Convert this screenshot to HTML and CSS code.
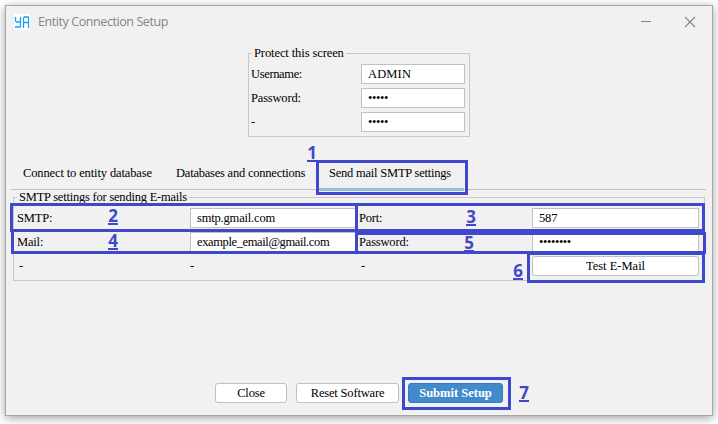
FILE: index.html
```html
<!DOCTYPE html>
<html lang="en">
<head>
<meta charset="utf-8">
<title>Entity Connection Setup</title>
<link rel="stylesheet" href="styles.css">
</head>
<body>
<div class="window">
  <header class="titlebar">
    <svg class="logo" width="16" height="16" viewBox="0 0 16 16"><path d="M0 0h16v16H0z" fill="#fff"/><path d="M1.500 3v4l1 1h3.500M6.500 3v9.500l-1 .5H1M9.500 14V4l1-1h3.500l.5 1v10M9.500 8.500h5" fill="none" stroke="#1c9df0" stroke-width="1.300"/></svg>
    <span class="title">Entity Connection Setup</span>
    <svg class="controls" width="56" height="12" viewBox="0 0 56 12"><path d="M0 5.500h10" stroke="#858585"/><path d="M44 1l10 10M54 1l-10 10" stroke="#858585" stroke-width="1.100"/></svg>
  </header>
  <section class="group protect">
    <h2 class="legend">Protect this screen</h2>
    <div class="row"><span class="name">Username:</span><div class="field caps">ADMIN</div></div>
    <div class="row"><span>Password:</span><div class="field secret">•••••</div></div>
    <div class="row"><span>-</span><div class="field secret">•••••</div></div>
  </section>
  <nav class="tabs">
    <div class="tab first">Connect to entity database</div>
    <div class="tab">Databases and connections</div>
    <div class="tab active">Send mail SMTP settings</div>
  </nav>
  <section class="group smtp">
    <h2 class="legend">SMTP settings for sending E-mails</h2>
    <div class="grid">
      <span>SMTP:</span><div class="field">smtp.gmail.com</div><span>Port:</span><div class="field">587</div>
      <span>Mail:</span><div class="field tight">example_email@gmail.com</div><span>Password:</span><div class="field secret">••••••••</div>
      <span class="dash">-</span><span>-</span><span class="dash">-</span><div class="button test">Test E-Mail</div>
    </div>
  </section>
  <footer class="actions">
    <div class="button close">Close</div>
    <div class="button reset">Reset Software</div>
    <div class="button primary">Submit Setup</div>
  </footer>
</div>
<div class="mark m1"></div><div class="mark m2"></div><div class="mark m3"></div><div class="mark m4"></div><div class="mark m5"></div><div class="mark m6"></div><div class="mark m7"></div>
<span class="num n1">1</span><span class="num n2">2</span><span class="num n3">3</span><span class="num n4">4</span><span class="num n5">5</span><span class="num n6">6</span><span class="num n7">7</span>
</body>
</html>
```
FILE: styles.css
```css
* { box-sizing: border-box; }
body {
  margin: 0;
  padding: 5px;
  width: 718px;
  height: 424px;
  overflow: hidden;
  position: relative;
  background: #fff;
  color: #000;
  font: 12.5px/16px "Liberation Serif", serif;
  letter-spacing: -.18px;
}
.window {
  width: 708px;
  height: 411px;
  border: 1px solid #a6a6a6;
  background: #f1f1f1;
  box-shadow: 0 2px 9px rgba(0, 0, 0, .38);
  display: flex;
  flex-direction: column;
}
.titlebar {
  height: 31px;
  padding: 0 15px 0 8px;
  display: flex;
  align-items: center;
  color: #858585;
  font: 12.5px/16px "Open Sans", sans-serif;
  letter-spacing: -.42px;
}
.title { margin: 1px 0 0 8px; }
.controls { margin-left: auto; }
.group { border: 1px solid #c8c8c8; }
.legend {
  width: max-content;
  height: 14px;
  margin: -8px 0 0 3px;
  padding: 0 2px;
  background: #f1f1f1;
  font-size: 12.5px;
  font-weight: normal;
  line-height: 14px;
}
.protect {
  width: 222px;
  height: 84px;
  margin: 16px 0 0 242px;
}
.protect .legend { letter-spacing: -.1px; }
.row {
  display: grid;
  grid-template-columns: 110px 104px;
  padding-left: 2px;
  margin-top: 4px;
  line-height: 20px;
}
.name { letter-spacing: -.35px; }
.field {
  height: 20px;
  padding-left: 6px;
  border: 1px solid #c0c0c0;
  background: #fff;
  line-height: 18px;
}
.caps { letter-spacing: .15px; }
.tight { letter-spacing: -.5px; }
.field.tight { letter-spacing: -.5px; font-size: 12.5px; }
.secret { letter-spacing: -.4px; }
.tabs {
  display: flex;
  gap: 8px;
  height: 26px;
  margin: 27px 6px 0 5px;
  padding-left: 4px;
  border-bottom: 1px solid #c0c0c0;
}
.tab {
  width: 145px;
  height: 27px;
  padding-left: 8px;
  line-height: 18px;
  white-space: nowrap;
  letter-spacing: -.22px;
}
.first { letter-spacing: -.13px; }
.active { border-bottom: 3px solid #99bce0; margin-left: -2px; padding-left: 10px; }
.smtp {
  width: 692px;
  height: 84px;
  margin: 7px 0 0 7px;
}
.smtp .legend { letter-spacing: -.22px; }
.grid {
  display: grid;
  grid-template-columns: 173px 167px 2px 173px 167px;
  grid-auto-rows: 20px;
  row-gap: 4px;
  padding: 4px 0 0 3px;
  line-height: 20px;
}
.grid > :nth-child(4n + 3) { grid-column: 4; }
.dash { padding-left: 2px; }
.button {
  height: 20px;
  border: 1px solid #c0c0c0;
  border-radius: 3px;
  background: #fff;
  text-align: center;
  line-height: 18px;
}
.actions {
  display: flex;
  gap: 9px;
  margin: auto 0 12px 209px;
}
.test { letter-spacing: 0; }
.close { width: 72px; }
.reset { width: 103px; }
.primary {
  width: 95px;
  border-color: #357ebd;
  background: #428bca;
  color: #fff;
  font-weight: bold;
  letter-spacing: 0;
}
.grid .tight { letter-spacing: -.38px; }
.mark { position: absolute; border: 3px solid #3f48cc; }
.m1 { left: 316px; top: 160px; width: 152px; height: 35px; }
.m2 { left: 10px; top: 203px; width: 348px; height: 29px; }
.m3 { left: 355px; top: 203px; width: 350px; height: 29px; }
.m4 { left: 11px; top: 229px; width: 347px; height: 25px; }
.m5 { left: 355px; top: 232px; width: 351px; height: 22px; }
.m6 { left: 527px; top: 252px; width: 178px; height: 31px; }
.m7 { left: 402px; top: 377px; width: 109px; height: 33px; }
.num {
  position: absolute;
  width: 10px;
  height: 18px;
  border-bottom: 2px solid #3f48cc;
  color: #3f48cc;
  font: bold 17px/18px "Open Sans", sans-serif;
  letter-spacing: 0;
  text-align: center;
}
.n1 { left: 307px; top: 144px; }
.n2 { left: 108px; top: 207px; }
.n3 { left: 466px; top: 208px; }
.n4 { left: 108px; top: 232px; }
.n5 { left: 464px; top: 234px; }
.n6 { left: 513px; top: 262px; }
.n7 { left: 519px; top: 384px; }
```
